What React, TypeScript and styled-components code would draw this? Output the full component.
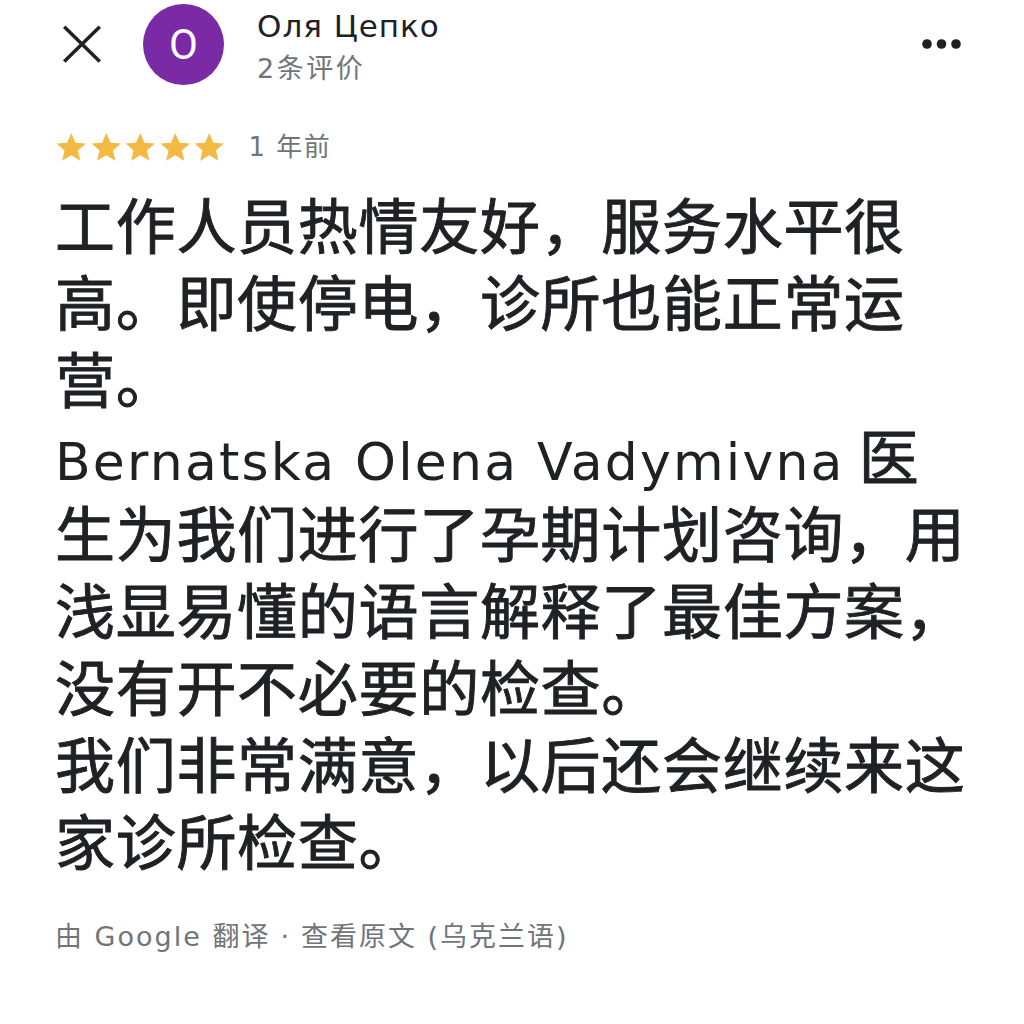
import React from "react";
import styled, { createGlobalStyle } from "styled-components";

const GlobalStyle = createGlobalStyle`
  html, body {
    margin: 0;
    padding: 0;
    background: #ffffff;
  }
  body {
    font-family: "DejaVu Sans", "Noto Sans CJK SC", sans-serif;
    color: #202124;
  }
`;

const Page = styled.div`
  width: 1024px;
  height: 1024px;
  box-sizing: border-box;
  display: flex;
  flex-direction: column;
  overflow: hidden;
`;

const Header = styled.header`
  display: flex;
  align-items: center;
  height: 88px;
  padding: 0 60px 0 60px;
`;

const IconButton = styled.button`
  border: 0;
  background: none;
  padding: 0;
  display: flex;
  align-items: center;
  justify-content: center;
  width: 44px;
  height: 44px;
  cursor: pointer;
`;

const Avatar = styled.div`
  width: 81px;
  height: 81px;
  border-radius: 50%;
  background: #7b2aa5;
  color: #ffffff;
  display: flex;
  align-items: center;
  justify-content: center;
  font-family: Roboto, sans-serif;
  font-size: 42px;
  margin-left: 39px;
`;

const Author = styled.div`
  display: flex;
  flex-direction: column;
  margin-left: 33px;
  flex: 1;
  margin-top: 4px;
`;

const Name = styled.div`
  font-size: 31px;
  letter-spacing: 1px;
  line-height: 40px;
  color: #202124;
`;

const Meta = styled.div`
  font-size: 27px;
  letter-spacing: 2.5px;
  line-height: 34px;
  color: #70757a;
  margin-top: 6px;
`;

const Ago = styled(Meta)`
  margin-top: 0;
  font-size: 26px;
  letter-spacing: 1.5px;
`;

const RatingRow = styled.div`
  display: flex;
  align-items: center;
  gap: 22px;
  padding: 42px 0 0 54px;
`;

const Stars = styled.div`
  display: flex;
  gap: 0;
`;

const Body = styled.div`
  padding: 20px 0 0 55px;
  width: 915px;
  font-family: "Noto Sans CJK SC", sans-serif;
  font-size: 60px;
  letter-spacing: 0.7px;
  line-height: 77px;
  color: #202124;
  -webkit-text-stroke: 0.9px #202124;
`;

const Latin = styled.span`
  font-family: "DejaVu Sans", sans-serif;
  font-size: 52px;
  letter-spacing: 2.2px;
  line-height: 1;
  -webkit-text-stroke: 0;
`;

const Footer = styled.div`
  padding: 42px 0 0 55px;
  font-size: 27px;
  letter-spacing: 2px;
  line-height: 36px;
  color: #70757a;
`;

const Dot = styled.span`
  margin: 0 10px;
`;

const Star = () => (
  <svg width="34.5" height="34" viewBox="0 0 24 24">
    <path
      fill="#f4b942"
      d="M12 2.2l2.95 6.75 7.35.65-5.55 4.85 1.65 7.2L12 17.85l-6.4 3.8 1.65-7.2L1.7 9.6l7.35-.65z"
    />
  </svg>
);

export default function App() {
  return (
    <>
      <GlobalStyle />
      <Page>
        <Header>
          <IconButton aria-label="close">
            <svg width="44" height="44" viewBox="0 0 24 24">
              <path
                d="M2.3 2.6l19.4 19M21.7 2.6L2.3 21.6"
                stroke="#202124"
                strokeWidth="1.9"
                fill="none"
              />
            </svg>
          </IconButton>
          <Avatar>O</Avatar>
          <Author>
            <Name>Оля Цепко</Name>
            <Meta>2条评价</Meta>
          </Author>
          <IconButton aria-label="more">
            <svg width="44" height="12" viewBox="0 0 44 12">
              <circle cx="7" cy="6" r="4.8" fill="#202124" />
              <circle cx="21.5" cy="6" r="4.8" fill="#202124" />
              <circle cx="36" cy="6" r="4.8" fill="#202124" />
            </svg>
          </IconButton>
        </Header>
        <RatingRow>
          <Stars>
            {[0, 1, 2, 3, 4].map((i) => (
              <Star key={i} />
            ))}
          </Stars>
          <Ago>1 年前</Ago>
        </RatingRow>
        <Body>
          工作人员热情友好，服务水平很高。即使停电，诊所也能正常运营。
          <br />
          <Latin>Bernatska Olena Vadymivna</Latin> 医生为我们进行了孕期计划咨询，用浅显易懂的语言解释了最佳方案，没有开不必要的检查。
          <br />
          我们非常满意，以后还会继续来这家诊所检查。
        </Body>
        <Footer>
          由 Google 翻译<Dot>·</Dot>查看原文 (乌克兰语)
        </Footer>
      </Page>
    </>
  );
}
